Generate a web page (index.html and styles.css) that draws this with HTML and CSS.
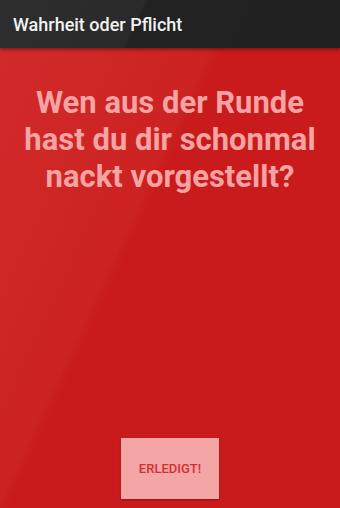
FILE: index.html
```html
<!DOCTYPE html>
<html>
<head>
  <title>Wahrheit oder Pflicht</title>
  <link rel="stylesheet" href="styles.css">
</head>
<body>
  <div class="toolbar">
    <span class="toolbar-title">Wahrheit oder Pflicht</span>
  </div>

  <div class="content">
    <h1 class="question">Wen aus der Runde hast du dir schonmal nackt vorgestellt?</h1>
    <button class="done-button">ERLEDIGT!</button>
  </div>
</body>
</html>
```

FILE: styles.css
```css
/* Truth or dare card screen */
html, body {
  margin: 0;
  height: 100%;
}

body {
  display: flex;
  flex-direction: column;
  font-family: Roboto, "Liberation Sans", sans-serif;
  background-color: #c91b1b;
}

.toolbar {
  height: 48px;
  flex-shrink: 0;
  display: flex;
  align-items: center;
  padding-left: 13px;
  background: linear-gradient(115deg, #2e2e2e 0%, #2a2a2a 40%, #222222 41%, #212121 100%);
  box-shadow: 0 2px 3px rgba(0, 0, 0, 0.35);
  position: relative;
  z-index: 1;
}

.toolbar-title {
  color: #f2f2f2;
  font-size: 18px;
  font-weight: 500;
}

.content {
  flex: 1;
  display: flex;
  flex-direction: column;
  align-items: center;
  background: linear-gradient(115deg, #d22a2a 0%, #cc2222 38%, #c91b1b 40%, #c91b1b 100%);
}

.question {
  margin: 36px 12px 0;
  color: #f5a3a3;
  font-size: 31px;
  font-weight: 700;
  line-height: 37px;
  text-align: center;
}

.done-button {
  margin-top: auto;
  margin-bottom: 9px;
  width: 98px;
  height: 61px;
  border: none;
  background-color: #f4a6a6;
  color: #d32f2f;
  font-family: Roboto, "Liberation Sans", sans-serif;
  font-size: 13px;
  font-weight: 500;
  box-shadow: 0 1px 2px rgba(0, 0, 0, 0.3);
}
```
